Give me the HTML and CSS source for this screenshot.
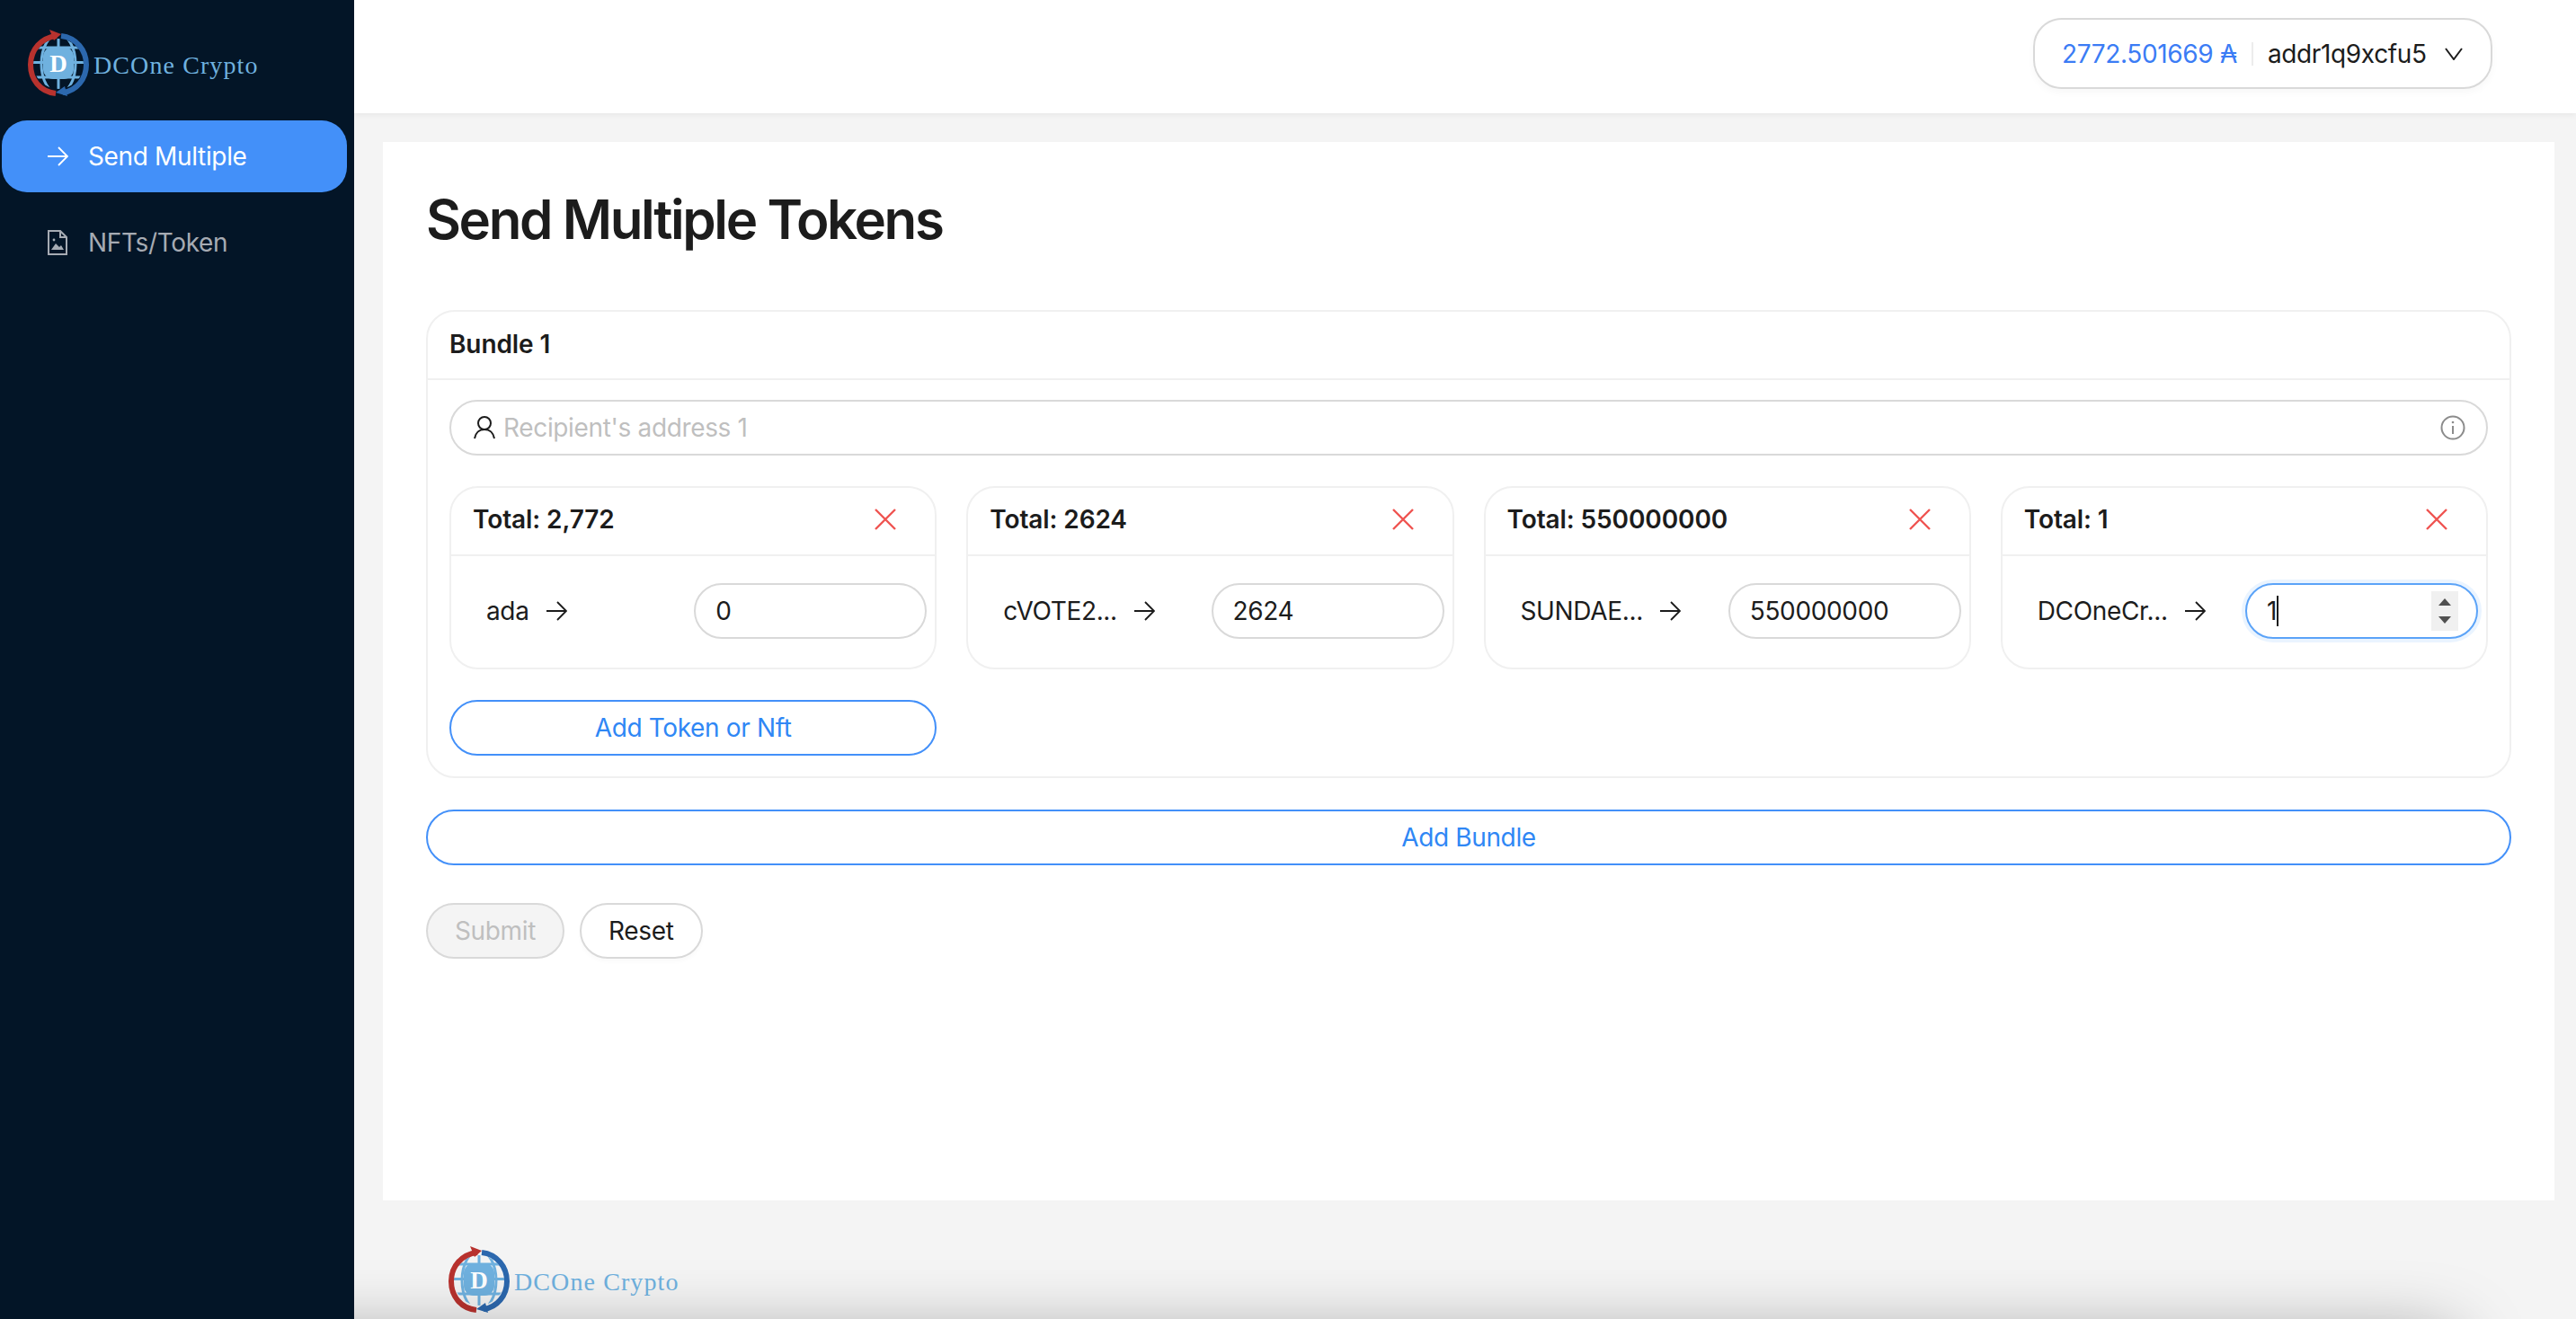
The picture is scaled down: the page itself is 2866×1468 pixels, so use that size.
FILE: index.html
```html
<!DOCTYPE html>
<html lang="en">
  <head>
    <meta charset="UTF-8" />
    <title>DCOne Crypto - Send Multiple</title>
    <link rel="stylesheet" href="styles.css">
  </head>
  <body>
    <svg class="defs" width="0" height="0">
      <symbol id="logo" viewBox="0 0 72 76" overflow="visible">
        <clipPath id="globe-clip"><circle cx="36" cy="38" r="28" /></clipPath>
        <g clip-path="url(#globe-clip)" fill="none" stroke="#6fb1df" stroke-width="3">
          <path d="M2 20H70M2 36.500H70M2 53H70M36 4V72" />
          <ellipse cx="36" cy="38" rx="19" ry="33" />
          <rect x="19" y="19" width="34" height="36" rx="11" fill="#6fb1df" stroke="none" />
        </g>
        <path d="M33 71C15 69 5 55 5 39C5 22 17 9 34 7" fill="none" stroke="#b8322e" stroke-width="6" />
        <path d="M26 0L39 5L31 12Z" fill="#b8322e" />
        <path d="M39 7C56 9 67 23 67 39C67 55 56 68 41 70" fill="none" stroke="#2c68ae" stroke-width="6" />
        <path d="M33 70L43 63L46 74Z" fill="#2c68ae" />
      </symbol>
      <symbol id="arrow" viewBox="0 0 24 24">
        <path d="M1 12H22M13 2L23 12L13 22" fill="none" stroke="currentColor" stroke-width="1.9" />
      </symbol>
    </svg>

    <aside class="sidebar">
      <div class="brand">
        <span class="brand-mark">
          <svg class="brand-logo"><use href="#logo" /></svg>
          <span class="logo-letter">D</span>
        </span>
        <span class="brand-name">DCOne Crypto</span>
      </div>
      <nav class="menu">
        <a class="menu-item active">
          <svg class="menu-icon"><use href="#arrow" /></svg>
          Send Multiple
        </a>
        <a class="menu-item">
          <svg class="menu-icon" viewBox="0 0 24 28" fill="none" stroke="currentColor" stroke-width="2">
            <path d="M2 1H15L22 8V27H2Z" />
            <path d="M15 1V8H22" />
            <path d="M5 22L10 15L14 19L16 17L19 22Z" fill="currentColor" stroke="none" />
            <circle cx="8" cy="11" r="1.4" fill="currentColor" stroke="none" />
          </svg>
          NFTs/Token
        </a>
      </nav>
    </aside>

    <div class="main">
      <header class="topbar">
        <div class="wallet">
          <span class="balance">2772.501669 ₳</span>
          <span class="wallet-divider"></span>
          <span class="address">addr1q9xcfu5</span>
          <svg class="chevron" viewBox="0 0 20 14" fill="none" stroke="currentColor" stroke-width="2">
            <path d="M1 1L10 13L19 1" />
          </svg>
        </div>
      </header>

      <div class="content">
        <main class="panel">
          <h1 class="page-title">Send Multiple Tokens</h1>

          <section class="bundle">
            <div class="bundle-head">Bundle 1</div>
            <div class="bundle-body">
              <div class="address-field">
                <svg class="user-icon" viewBox="0 0 24 26" fill="none" stroke="currentColor" stroke-width="2">
                  <circle cx="12" cy="8" r="7" />
                  <path d="M1 25C2 19 6 15 12 15C18 15 22 19 23 25" />
                </svg>
                <input class="address-input" type="text" placeholder="Recipient's address 1" />
                <svg class="info-icon" viewBox="0 0 28 28" fill="none" stroke="currentColor" stroke-width="2">
                  <circle cx="14" cy="14" r="12.5" />
                  <path d="M14 12V21" />
                  <circle cx="14" cy="8" r="1.3" fill="currentColor" stroke="none" />
                </svg>
              </div>

              <div class="token-grid">
                <div class="token-card">
                  <div class="token-head">
                    <span>Total: 2,772</span>
                    <svg class="remove-icon" viewBox="0 0 24 24"><path d="M1 1L23 23M23 1L1 23" /></svg>
                  </div>
                  <div class="token-body">
                    <span class="token-label">ada <svg class="token-arrow"><use href="#arrow" /></svg></span>
                    <input class="amount-input" type="text" value="0" />
                  </div>
                </div>

                <div class="token-card">
                  <div class="token-head">
                    <span>Total: 2624</span>
                    <svg class="remove-icon" viewBox="0 0 24 24"><path d="M1 1L23 23M23 1L1 23" /></svg>
                  </div>
                  <div class="token-body">
                    <span class="token-label">cVOTE2... <svg class="token-arrow"><use href="#arrow" /></svg></span>
                    <input class="amount-input" type="text" value="2624" />
                  </div>
                </div>

                <div class="token-card">
                  <div class="token-head">
                    <span>Total: 550000000</span>
                    <svg class="remove-icon" viewBox="0 0 24 24"><path d="M1 1L23 23M23 1L1 23" /></svg>
                  </div>
                  <div class="token-body">
                    <span class="token-label">SUNDAE... <svg class="token-arrow"><use href="#arrow" /></svg></span>
                    <input class="amount-input" type="text" value="550000000" />
                  </div>
                </div>

                <div class="token-card">
                  <div class="token-head">
                    <span>Total: 1</span>
                    <svg class="remove-icon" viewBox="0 0 24 24"><path d="M1 1L23 23M23 1L1 23" /></svg>
                  </div>
                  <div class="token-body">
                    <span class="token-label">DCOneCr... <svg class="token-arrow"><use href="#arrow" /></svg></span>
                    <div class="amount-focused">
                      <span>1</span><span class="caret"></span>
                      <span class="spinner">
                        <span class="spin-up"></span>
                        <span class="spin-down"></span>
                      </span>
                    </div>
                  </div>
                </div>
              </div>

              <div class="token-grid">
                <button class="btn-outline" type="button">Add Token or Nft</button>
              </div>
            </div>
          </section>

          <button class="btn-outline btn-wide" type="button">Add Bundle</button>

          <div class="actions">
            <button class="btn btn-disabled" type="button">Submit</button>
            <button class="btn" type="button">Reset</button>
          </div>
        </main>
      </div>

      <footer class="footer">
        <span class="brand-mark">
          <svg class="brand-logo"><use href="#logo" /></svg>
          <span class="logo-letter">D</span>
        </span>
        <span class="brand-name">DCOne Crypto</span>
      </footer>
      <div class="bottom-shade"></div>
    </div>
  </body>
</html>
```

FILE: styles.css
```css
* {
  box-sizing: border-box;
}
body {
  margin: 0;
  display: flex;
  height: 1468px;
  overflow: hidden;
  font-family: "Inter", "Liberation Sans", sans-serif;
  font-size: 28px;
  letter-spacing: -0.35px;
  color: #1c1c1c;
  background: #f4f4f4;
}
.defs {
  position: absolute;
}
input,
button {
  font: inherit;
  letter-spacing: inherit;
  color: inherit;
  outline: none;
}

/* Sidebar */
.sidebar {
  width: 394px;
  flex-shrink: 0;
  background: #031527;
}
.brand {
  display: flex;
  align-items: flex-start;
  height: 134px;
  padding: 33px 0 0 29px;
}
.brand-mark {
  position: relative;
  display: block;
  width: 72px;
  height: 76px;
  flex-shrink: 0;
}
.brand-logo {
  display: block;
  width: 72px;
  height: 76px;
}
.logo-letter {
  position: absolute;
  top: 21px;
  left: 0;
  width: 72px;
  text-align: center;
  font-family: "Liberation Serif", serif;
  font-size: 27px;
  line-height: 34px;
  letter-spacing: 0;
  font-weight: bold;
  color: #fff;
}
.brand-name {
  font-family: "Liberation Serif", serif;
  font-size: 28px;
  letter-spacing: 1.1px;
  color: #6fb1df;
  margin: 24px 0 0 3px;
}
.menu {
  display: flex;
  flex-direction: column;
  gap: 16px;
  padding: 0 8px 0 2px;
}
.menu-item {
  display: flex;
  align-items: center;
  gap: 22px;
  height: 80px;
  padding-left: 50px;
  border-radius: 28px;
  color: #a6abb3;
}
.menu-item.active {
  color: #fff;
  background: #4390f9;
}
.menu-icon {
  width: 24px;
  height: 28px;
  flex-shrink: 0;
}

/* Header */
.main {
  flex: 1;
  min-width: 0;
  display: flex;
  flex-direction: column;
  position: relative;
  overflow: hidden;
}
.topbar {
  height: 126px;
  flex-shrink: 0;
  display: flex;
  justify-content: flex-end;
  padding: 20px 93px 0 0;
  background: #fff;
  box-shadow: 0 2px 6px rgba(0, 0, 0, 0.05);
}
.wallet {
  display: flex;
  align-items: center;
  width: 511px;
  height: 79px;
  padding: 0 30px;
  border: 2px solid #d9d9d9;
  border-radius: 32px;
  box-shadow: 0 4px 8px rgba(0, 0, 0, 0.03);
}
.balance {
  color: #3b7cf5;
  white-space: nowrap;
}
.wallet-divider {
  width: 2px;
  height: 26px;
  margin: 0 16px;
  background: #ececec;
}
.chevron {
  width: 20px;
  height: 14px;
  flex-shrink: 0;
  margin-left: 20px;
}

/* Content */
.content {
  padding: 32px 24px 0 32px;
}
.panel {
  height: 1178px;
  padding: 48px;
  background: #fff;
}
.page-title {
  margin: 0;
  height: 139px;
  font-size: 60px;
  line-height: 76px;
  letter-spacing: -2.4px;
  font-weight: 600;
}
.bundle {
  border: 2px solid #f0f0f0;
  border-radius: 32px;
}
.bundle-head {
  height: 76px;
  padding-left: 24px;
  line-height: 72px;
  font-weight: 600;
  letter-spacing: -0.1px;
  border-bottom: 2px solid #f0f0f0;
}
.bundle-body {
  padding: 22px 24px 23px;
}
.address-field {
  display: flex;
  align-items: center;
  height: 62px;
  padding: 0 23px 0 25px;
  border: 2px solid #d9d9d9;
  border-radius: 32px;
}
.user-icon {
  width: 24px;
  height: 26px;
  flex-shrink: 0;
}
.address-input {
  flex: 1;
  margin-left: 9px;
  border: none;
  padding: 0;
}
.address-input::placeholder {
  color: #bfbfbf;
}
.info-icon {
  width: 28px;
  height: 28px;
  flex-shrink: 0;
  color: #8c8c8c;
}
.token-grid {
  display: grid;
  grid-template-columns: repeat(4, 1fr);
  gap: 33px;
  margin-top: 34px;
}
.token-card {
  height: 204px;
  border: 2px solid #f0f0f0;
  border-radius: 32px;
}
.token-head {
  display: flex;
  justify-content: space-between;
  align-items: center;
  height: 76px;
  padding: 0 43px 4px 24px;
  font-weight: 600;
  letter-spacing: -0.1px;
  border-bottom: 2px solid #f0f0f0;
}
.remove-icon {
  width: 24px;
  height: 24px;
  fill: none;
  stroke: #ef5350;
  stroke-width: 2.4;
}
.token-body {
  display: grid;
  grid-template-columns: 1fr 259px;
  align-items: center;
  height: 124px;
  padding: 0 9px 2px 39px;
}
.token-label {
  display: flex;
  align-items: center;
  gap: 18px;
  white-space: nowrap;
}
.token-arrow {
  width: 24px;
  height: 24px;
}
.amount-input,
.amount-focused {
  width: 259px;
  height: 62px;
  padding: 0 22px;
  border: 2px solid #d9d9d9;
  border-radius: 32px;
  background: #fff;
}
.amount-focused {
  display: flex;
  align-items: center;
  border-color: #5ba3f8;
  box-shadow: 0 0 0 4px #eaf4ff;
}
.caret {
  width: 2px;
  height: 34px;
  background: #1c1c1c;
}
.spinner {
  display: flex;
  flex-direction: column;
  justify-content: space-between;
  align-items: center;
  width: 30px;
  height: 44px;
  margin-left: auto;
  margin-right: -2px;
  padding: 8px 0;
  background: #f0f0f0;
}
.spin-up,
.spin-down {
  width: 0;
  height: 0;
  border-left: 7px solid transparent;
  border-right: 7px solid transparent;
}
.spin-up {
  border-bottom: 8px solid #505050;
}
.spin-down {
  border-top: 8px solid #505050;
}

/* Buttons */
.btn-outline {
  height: 62px;
  padding: 0;
  border: 2px solid #4390f9;
  border-radius: 32px;
  background: #fff;
  color: #2f87f5;
}
.btn-wide {
  display: block;
  width: 100%;
  margin-top: 35px;
}
.actions {
  display: flex;
  gap: 17px;
  margin-top: 42px;
}
.btn {
  height: 62px;
  padding: 0 30px;
  border: 2px solid #d9d9d9;
  border-radius: 32px;
  background: #fff;
  box-shadow: 0 4px 4px rgba(0, 0, 0, 0.02);
}
.btn-disabled {
  color: #bfbfbf;
  background: #f4f4f4;
  box-shadow: none;
}

/* Footer */
.footer {
  display: flex;
  align-items: flex-start;
  padding: 51px 0 0 103px;
}
.footer .brand-name {
  margin: 24px 0 0 3px;
}
.bottom-shade {
  position: absolute;
  left: -200px;
  right: 136px;
  top: 1490px;
  height: 100px;
  background: #bbb;
  box-shadow: 0 0 80px rgba(0, 0, 0, 0.4);
}
```
